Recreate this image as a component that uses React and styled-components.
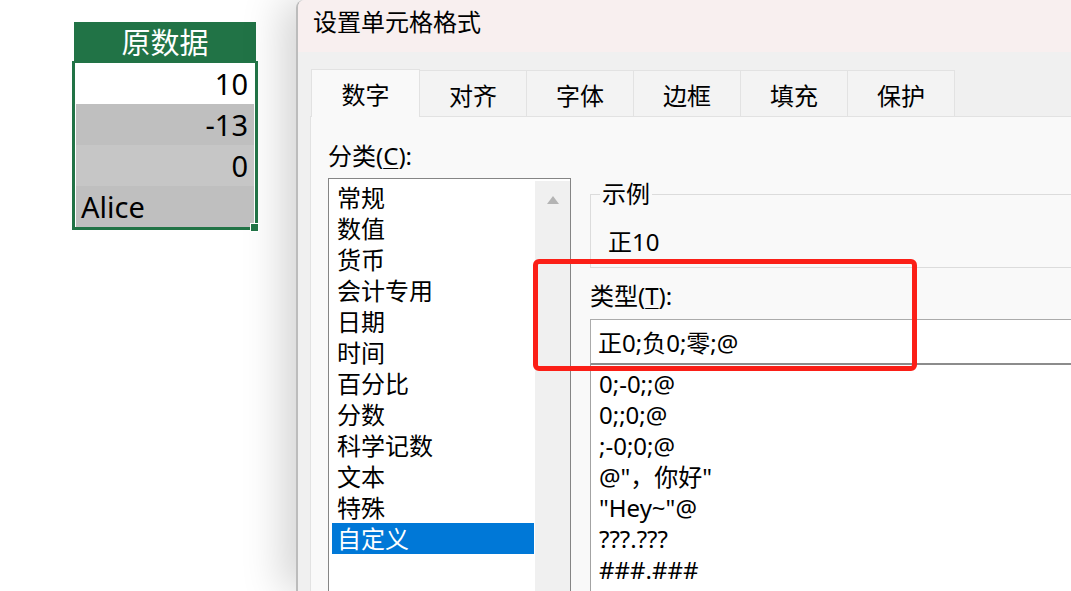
import React from "react";
import styled, { createGlobalStyle } from "styled-components";

const GlobalStyle = createGlobalStyle`
  html, body {
    margin: 0;
    padding: 0;
    background: #fff;
  }
  body {
    font-family: "Noto Sans", "Noto Sans CJK SC", sans-serif;
    color: #000;
  }
`;

const Page = styled.div`
  position: relative;
  display: flex;
  width: 1071px;
  height: 591px;
  overflow: hidden;
  background: #fff;
`;

// ---- spreadsheet on the left ----
const Sheet = styled.div`
  width: 296px;
  flex-shrink: 0;
  padding: 22px 0 0 72px;
  box-sizing: border-box;
`;

const HeaderCell = styled.div`
  margin-left: 2px;
  width: 182px;
  height: 41px;
  background: #217346;
  color: #fff;
  font-size: 29px;
  line-height: 41px;
  text-align: center;
`;

const Selection = styled.div`
  position: relative;
  margin-top: -2px;
  width: 186px;
  box-sizing: border-box;
  border: 3px solid #217346;
  border-top-width: 2px;
  padding: 0 1px;
  background: #fff;
`;

const Cell = styled.div`
  display: flex;
  align-items: center;
  justify-content: ${(p) => (p.left ? "flex-start" : "flex-end")};
  height: 41px;
  padding: 0 6px 0 5px;
  box-sizing: border-box;
  font-size: 29px;
  background: ${(p) => p.bg || "#fff"};
`;

const FillHandle = styled.div`
  position: absolute;
  right: -4px;
  bottom: -5px;
  width: 7px;
  height: 7px;
  background: #217346;
  border: 1px solid #fff;
`;

// ---- dialog ----
const Dialog = styled.div`
  flex: 1;
  min-width: 0;
  display: flex;
  flex-direction: column;
  background: #f0f0f0;
  border-left: 2px solid #bcbcbc;
  border-top-left-radius: 8px;
  overflow: hidden;
  box-shadow: -14px 0 40px rgba(0, 0, 0, 0.17);
`;

const TitleBar = styled.div`
  height: 52px;
  flex-shrink: 0;
  box-sizing: border-box;
  padding: 8px 0 0 15px;
  background: #f8efef;
  font-size: 24px;
  line-height: 28px;
`;

const Body = styled.div`
  flex: 1;
  display: flex;
  flex-direction: column;
  padding: 17px 0 0 12px;
`;

const Tabs = styled.div`
  position: relative;
  z-index: 1;
  display: flex;
  align-items: flex-start;
  height: 48px;
  margin-bottom: -1px;
  padding-left: 1px;
`;

const Tab = styled.div`
  width: ${(p) => (p.active ? "109px" : "108px")};
  height: ${(p) => (p.active ? "48px" : "46px")};
  margin-top: ${(p) => (p.active ? "0" : "1px")};
  margin-left: -1px;
  box-sizing: border-box;
  display: flex;
  align-items: center;
  justify-content: center;
  border: 1px solid #e2e2e2;
  border-bottom: none;
  background: ${(p) => (p.active ? "#f9f9f9" : "#f3f3f3")};
  font-size: 24px;
  padding-top: ${(p) => (p.active ? "0" : "1px")};
  &:first-child {
    margin-left: 0;
  }
`;

const Panel = styled.div`
  flex: 1;
  display: flex;
  gap: 19px;
  padding: 21px 0 0 17px;
  background: #f9f9f9;
  border-top: 1px solid #e2e2e2;
  border-left: 1px solid #e2e2e2;
`;

const LeftCol = styled.div`
  width: 243px;
  flex-shrink: 0;
`;

const Label = styled.div`
  font-size: 24px;
  line-height: ${(p) => p.lh || "36px"};
  margin-top: ${(p) => p.mt || "0"};
  u {
    text-decoration-thickness: 1px;
    text-underline-offset: 3px;
  }
`;

const ListBox = styled.div`
  display: flex;
  margin-top: 4px;
  height: 440px;
  border: 1px solid #858585;
  background: #fff;
`;

const ListItems = styled.div`
  flex: 1;
  padding: 3px 1px 0 3px;
`;

const ListItem = styled.div`
  height: 31px;
  line-height: 31px;
  padding-left: 5px;
  font-size: 24px;
  background: ${(p) => (p.selected ? "#0078d7" : "transparent")};
  color: ${(p) => (p.selected ? "#fff" : "#000")};
`;

const ScrollTrack = styled.div`
  width: 35px;
  margin-top: 2px;
  background: #f0f0f0;
  display: flex;
  justify-content: center;
  padding-top: 15px;
  box-sizing: border-box;
  svg {
    display: block;
  }
`;

const RightCol = styled.div`
  flex: 1;
  min-width: 0;
  padding-top: 42px;
`;

const Sample = styled.fieldset`
  margin: 0;
  padding: 0 0 10px 17px;
  border: 1px solid #dcdcdc;
  border-right: none;
  min-width: 0;
`;

const Legend = styled.legend`
  margin-left: -8px;
  padding: 0 2px;
  font-size: 24px;
  line-height: 28px;
`;

const SampleText = styled.div`
  margin-top: 19px;
  font-size: 24px;
  line-height: 30px;
`;

const TypeInput = styled.div`
  margin-top: 8px;
  height: 46px;
  box-sizing: border-box;
  padding-left: 7px;
  display: flex;
  align-items: center;
  background: #fff;
  border: 1px solid #ababab;
  border-right: none;
  border-bottom: 2px solid #8c8c8c;
  font-size: 24px;
`;

const FormatList = styled.div`
  height: 240px;
  padding: 3px 0 0 8px;
  background: #fff;
  border-left: 1px solid #a3a3a3;
`;

const FormatItem = styled.div`
  height: 31px;
  line-height: 31px;
  font-size: 24px;
  white-space: pre;
`;

const Highlight = styled.div`
  position: absolute;
  left: 533px;
  top: 259px;
  width: 384px;
  height: 112px;
  box-sizing: border-box;
  border: 5px solid #fb1f17;
  border-radius: 6px;
  pointer-events: none;
`;

const cells = [
  { text: "10", bg: "#fff" },
  { text: "-13", bg: "#bfbfbf" },
  { text: "0", bg: "#c6c6c6" },
  { text: "Alice", bg: "#bfbfbf", left: true },
];

const tabs = ["数字", "对齐", "字体", "边框", "填充", "保护"];

const categories = [
  "常规",
  "数值",
  "货币",
  "会计专用",
  "日期",
  "时间",
  "百分比",
  "分数",
  "科学记数",
  "文本",
  "特殊",
  "自定义",
];

const formats = [
  "0;-0;;@",
  "0;;0;@",
  ";-0;0;@",
  '@"，你好"',
  '"Hey~"@',
  "???.???",
  "###.###",
];

export default function App() {
  return (
    <Page>
      <GlobalStyle />
      <Sheet>
        <HeaderCell>原数据</HeaderCell>
        <Selection>
          {cells.map((c) => (
            <Cell key={c.text} bg={c.bg} left={c.left}>
              {c.text}
            </Cell>
          ))}
          <FillHandle />
        </Selection>
      </Sheet>

      <Dialog>
        <TitleBar>设置单元格格式</TitleBar>
        <Body>
          <Tabs>
            {tabs.map((t, i) => (
              <Tab key={t} active={i === 0}>
                {t}
              </Tab>
            ))}
          </Tabs>
          <Panel>
            <LeftCol>
              <Label>
                分类(<u>C</u>):
              </Label>
              <ListBox>
                <ListItems>
                  {categories.map((c) => (
                    <ListItem key={c} selected={c === "自定义"}>
                      {c}
                    </ListItem>
                  ))}
                </ListItems>
                <ScrollTrack>
                  <svg width="12" height="8" viewBox="0 0 12 8">
                    <polygon points="6,0 12,8 0,8" fill="#b4b4b4" />
                  </svg>
                </ScrollTrack>
              </ListBox>
            </LeftCol>
            <RightCol>
              <Sample>
                <Legend>示例</Legend>
                <SampleText>正10</SampleText>
              </Sample>
              <Label lh="30px" mt="13px">
                类型(<u>T</u>):
              </Label>
              <TypeInput>正0;负0;零;@</TypeInput>
              <FormatList>
                {formats.map((f) => (
                  <FormatItem key={f}>{f}</FormatItem>
                ))}
              </FormatList>
            </RightCol>
          </Panel>
        </Body>
      </Dialog>
      <Highlight />
    </Page>
  );
}
